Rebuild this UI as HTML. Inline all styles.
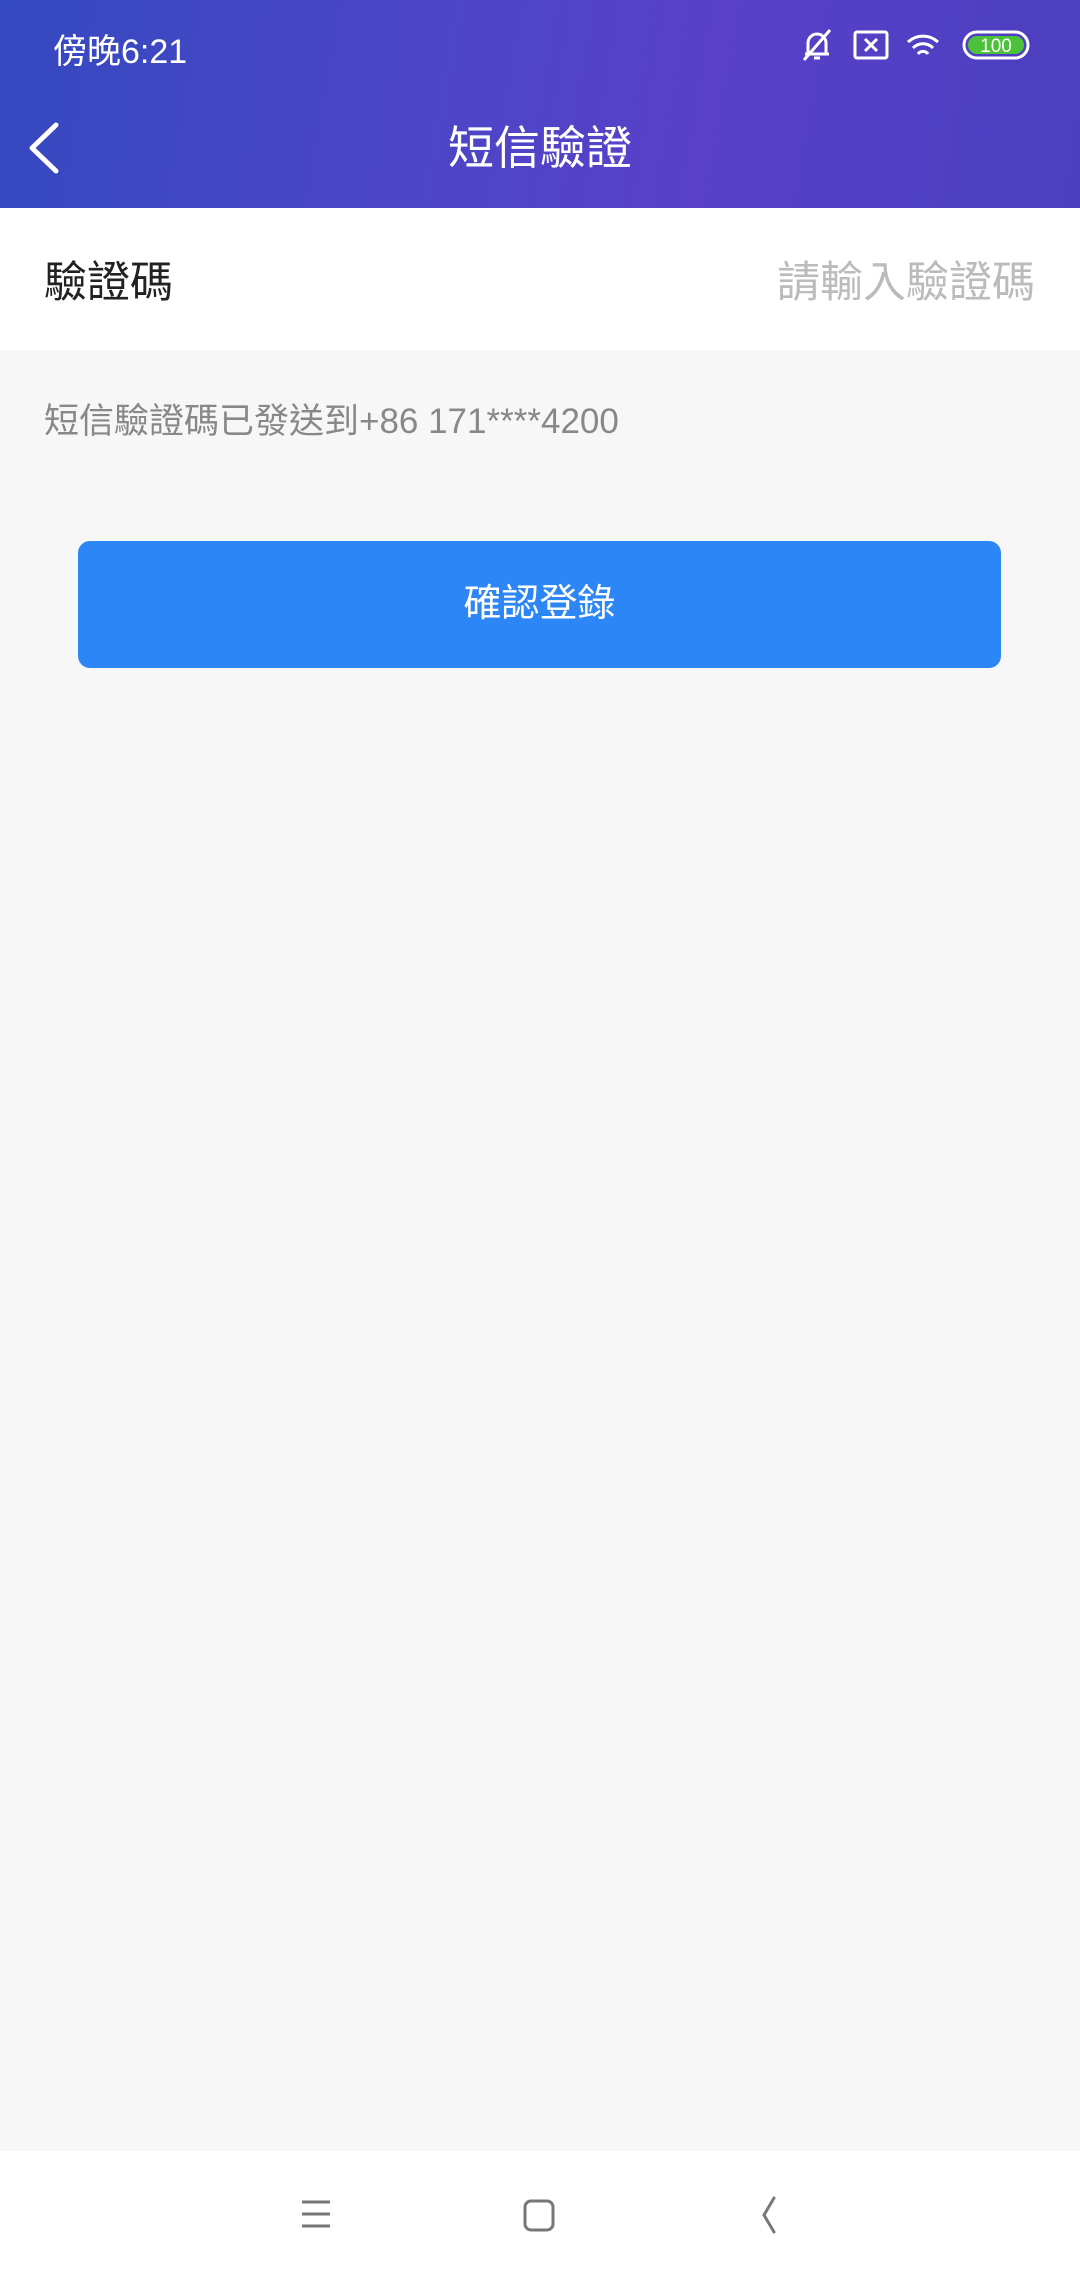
<!DOCTYPE html>
<html><head><meta charset="utf-8"><style>
*{margin:0;padding:0;box-sizing:border-box}
body{width:1080px;height:2280px;background:#f7f7f7;font-family:"Liberation Sans","Noto Sans CJK TC",sans-serif;position:relative;overflow:hidden}
.hdr{position:absolute;left:0;top:0;width:1080px;height:208px;background:linear-gradient(100deg,#3448bf 0%,#4a47c6 35%,#5840c8 65%,#4b3fbf 100%)}
.abs{position:absolute}
</style></head><body>
<div class="hdr"></div>
<div class="abs" style="left:53px;top:24px;color:#fff;font-size:34px;">傍晚6:21</div>
<svg class="abs" style="left:800px;top:26px" width="240" height="40" viewBox="0 0 240 40">
 <g fill="none" stroke="#fff" stroke-width="3">
  <path d="M8 28 V17 a9 9 0 0 1 18 0 V28 H5 H29"/><path d="M4 34 L30 4"/><path d="M14 32 h6"/>
  <rect x="55" y="6" width="32" height="26" rx="2"/><path d="M65 13 l12 12 M77 13 l-12 12"/>
  <path d="M108 16 a22 22 0 0 1 30 0 M113 22 a14 14 0 0 1 20 0 M118 28 a6 6 0 0 1 10 0"/>
  <rect x="164" y="6" width="64" height="26" rx="13" stroke-width="3"/>
 </g>
 <rect x="168" y="10" width="56" height="18" rx="9" fill="#4cc23a"/>
 <text x="196" y="26" fill="#fff" font-size="19" text-anchor="middle" font-family="Liberation Sans">100</text>
</svg>
<svg class="abs" style="left:26px;top:122px" width="36" height="52" viewBox="0 0 36 52"><path d="M30 3 L6 26 L30 49" fill="none" stroke="#fff" stroke-width="5" stroke-linecap="round" stroke-linejoin="round"/></svg>
<div class="abs" style="left:0;width:1080px;top:120px;text-align:center;color:#fff;font-size:46px;line-height:56px">短信驗證</div>
<div class="abs" style="left:0;top:208px;width:1080px;height:142px;background:#fff"></div>
<div class="abs" style="left:44px;top:256px;font-size:43px;color:#222;line-height:54px">驗證碼</div>
<div class="abs" style="right:45px;top:256px;font-size:43px;color:#bbb;line-height:54px">請輸入驗證碼</div>
<div class="abs" style="left:44px;top:400px;font-size:35px;color:#888;line-height:44px">短信驗證碼已發送到+86 171****4200</div>
<div class="abs" style="left:78px;top:541px;width:923px;height:127px;background:#2d86f5;border-radius:12px;color:#fff;font-size:38px;text-align:center;line-height:127px">確認登錄</div>
<div class="abs" style="left:0;top:2151px;width:1080px;height:129px;background:#fff"></div>
<svg class="abs" style="left:290px;top:2190px" width="520" height="50" viewBox="0 0 520 50">
 <g fill="none" stroke="#777" stroke-width="3">
  <path d="M12 12 h28 M12 24 h28 M12 36 h28"/>
  <rect x="235" y="11" width="28" height="29" rx="6"/>
  <path d="M484 8 L474 25 L484 42" stroke-linecap="round"/>
 </g>
</svg>
</body></html>
